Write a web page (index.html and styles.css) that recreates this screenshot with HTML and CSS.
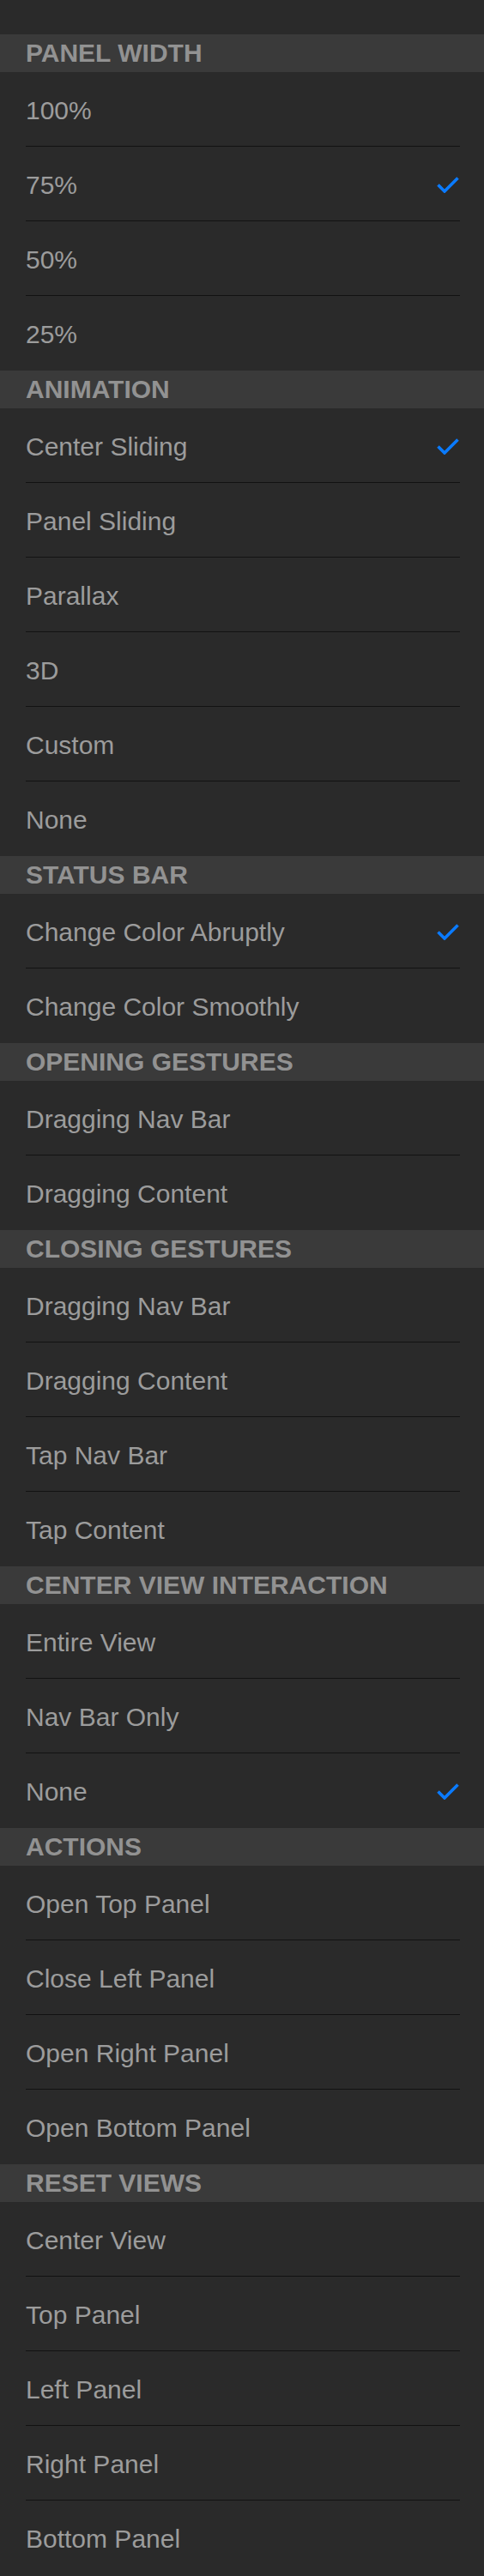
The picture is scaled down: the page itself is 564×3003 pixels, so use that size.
FILE: index.html
```html
<!DOCTYPE html>
<html>
<head>
<meta charset="utf-8">
<link rel="stylesheet" href="styles.css">
</head>
<body>
<div class="page">
  <div class="section">
    <div class="header">PANEL WIDTH</div>
    <div class="row"><span class="label">100%</span></div>
    <div class="row"><span class="label">75%</span><svg class="check" viewBox="0 0 26 20"><path d="M1.5 10.5 L9 18 L24.5 2.5"/></svg></div>
    <div class="row"><span class="label">50%</span></div>
    <div class="row"><span class="label">25%</span></div>
  </div>
  <div class="section">
    <div class="header">ANIMATION</div>
    <div class="row"><span class="label">Center Sliding</span><svg class="check" viewBox="0 0 26 20"><path d="M1.5 10.5 L9 18 L24.5 2.5"/></svg></div>
    <div class="row"><span class="label">Panel Sliding</span></div>
    <div class="row"><span class="label">Parallax</span></div>
    <div class="row"><span class="label">3D</span></div>
    <div class="row"><span class="label">Custom</span></div>
    <div class="row"><span class="label">None</span></div>
  </div>
  <div class="section">
    <div class="header">STATUS BAR</div>
    <div class="row"><span class="label">Change Color Abruptly</span><svg class="check" viewBox="0 0 26 20"><path d="M1.5 10.5 L9 18 L24.5 2.5"/></svg></div>
    <div class="row"><span class="label">Change Color Smoothly</span></div>
  </div>
  <div class="section">
    <div class="header">OPENING GESTURES</div>
    <div class="row"><span class="label">Dragging Nav Bar</span></div>
    <div class="row"><span class="label">Dragging Content</span></div>
  </div>
  <div class="section">
    <div class="header">CLOSING GESTURES</div>
    <div class="row"><span class="label">Dragging Nav Bar</span></div>
    <div class="row"><span class="label">Dragging Content</span></div>
    <div class="row"><span class="label">Tap Nav Bar</span></div>
    <div class="row"><span class="label">Tap Content</span></div>
  </div>
  <div class="section">
    <div class="header">CENTER VIEW INTERACTION</div>
    <div class="row"><span class="label">Entire View</span></div>
    <div class="row"><span class="label">Nav Bar Only</span></div>
    <div class="row"><span class="label">None</span><svg class="check" viewBox="0 0 26 20"><path d="M1.5 10.5 L9 18 L24.5 2.5"/></svg></div>
  </div>
  <div class="section">
    <div class="header">ACTIONS</div>
    <div class="row"><span class="label">Open Top Panel</span></div>
    <div class="row"><span class="label">Close Left Panel</span></div>
    <div class="row"><span class="label">Open Right Panel</span></div>
    <div class="row"><span class="label">Open Bottom Panel</span></div>
  </div>
  <div class="section">
    <div class="header">RESET VIEWS</div>
    <div class="row"><span class="label">Center View</span></div>
    <div class="row"><span class="label">Top Panel</span></div>
    <div class="row"><span class="label">Left Panel</span></div>
    <div class="row"><span class="label">Right Panel</span></div>
    <div class="row"><span class="label">Bottom Panel</span></div>
  </div>
</div>
</body>
</html>
```
FILE: styles.css
```css
html, body {
  margin: 0;
  padding: 0;
  background: #2a2a2a;
}
body {
  font-family: "Liberation Sans", Arial, Helvetica, sans-serif;
}
.page {
  width: 564px;
  padding-top: 40px;
  background: #2a2a2a;
}
.section {
  display: flex;
  flex-direction: column;
}
.header {
  height: 44px;
  box-sizing: border-box;
  background: #3a3a3a;
  color: #929292;
  font-weight: bold;
  font-size: 30px;
  padding-left: 30px;
  display: flex;
  align-items: center;
  white-space: nowrap;
}
.row {
  height: 87px;
  box-sizing: border-box;
  margin: 0 28px 0 30px;
  padding-top: 4px;
  border-bottom: 1px solid #121212;
  display: flex;
  align-items: center;
  justify-content: space-between;
  color: #9c9c9c;
  font-size: 30px;
  white-space: nowrap;
}
.row:last-child {
  border-bottom: none;
  padding-bottom: 1px;
}
.check {
  width: 26px;
  height: 20px;
  margin-top: -3px;
  margin-right: 1px;
  flex: none;
}
.check path {
  fill: none;
  stroke: #0a7bff;
  stroke-width: 3.6;
  stroke-linecap: butt;
  stroke-linejoin: miter;
}
```
